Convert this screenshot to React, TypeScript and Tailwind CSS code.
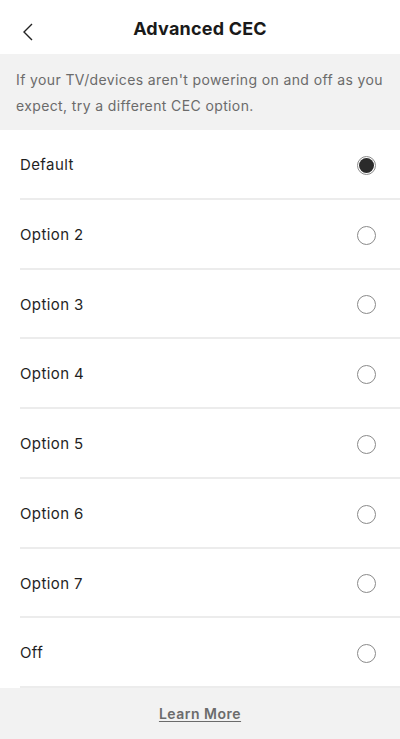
const options = [
  { label: "Default", selected: true },
  { label: "Option 2" },
  { label: "Option 3" },
  { label: "Option 4" },
  { label: "Option 5" },
  { label: "Option 6" },
  { label: "Option 7" },
  { label: "Off" },
];

function Radio({ selected }: { selected?: boolean }) {
  if (selected) {
    return (
      <span className="flex h-[19px] w-[19px] items-center justify-center rounded-full border border-[#8a8a8a]">
        <span className="h-[15px] w-[15px] rounded-full bg-[#2b2b2b]" />
      </span>
    );
  }
  return <span className="h-[19px] w-[19px] rounded-full border border-[#8a8a8a]" />;
}

export default function App() {
  return (
    <div
      className="flex h-[739px] w-[400px] flex-col bg-white text-[#1f1f1f]"
      style={{ fontFamily: "Inter, 'DejaVu Sans', sans-serif" }}
    >
      {/* header */}
      <div className="relative flex h-[54px] items-center justify-center">
        <button className="absolute left-[18px] top-[18px] p-1">
          <svg width="12" height="20" viewBox="0 0 12 20" fill="none">
            <path d="M10 2L2 10l8 8" stroke="#222" strokeWidth="1.4" />
          </svg>
        </button>
        <h1 className="pt-[2px] text-[18px] font-bold tracking-[0.2px] text-[#1a1a1a]">Advanced CEC</h1>
      </div>

      <div className="h-[76px] bg-[#f2f2f2] pl-4 pr-2 pt-[13px] text-[14px] leading-[26px] tracking-[0.38px] text-[#6b6b6b]">
        If your TV/devices aren't powering on and off as you expect, try a different CEC option.
      </div>

      <ul className="flex-1">
        {options.map((o) => (
          <li key={o.label} className="ml-5 flex h-[69.75px] items-center justify-between border-b-2 border-[#ececec] pt-[3px] pr-[24px]">
            <span className="text-[15px] tracking-[0.4px]">{o.label}</span>
            <Radio selected={o.selected} />
          </li>
        ))}
      </ul>

      <div className="flex h-[51px] items-center justify-center bg-[#f2f2f2]">
        <a className="text-[14px] font-semibold tracking-[0.5px] text-[#6b6b6b] underline underline-offset-2">Learn More</a>
      </div>
    </div>
  );
}
